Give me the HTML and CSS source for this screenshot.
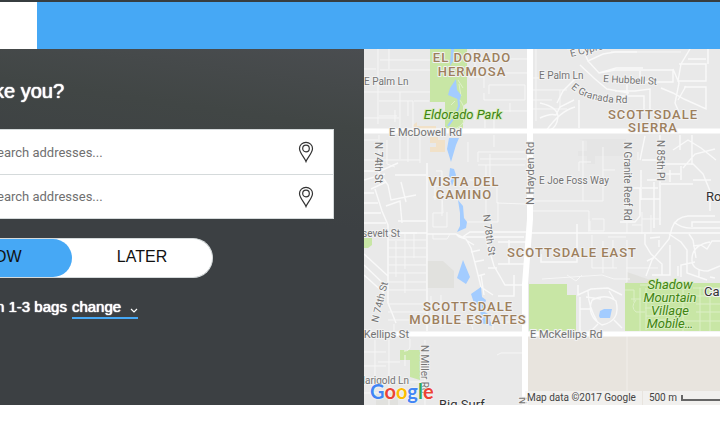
FILE: index.html
```html
<!DOCTYPE html>
<html lang="en">
<head>
    <meta charset="UTF-8">
    <meta name="viewport" content="width=device-width, initial-scale=1.0">
    <title>Book a ride</title>
    <link rel="stylesheet" href="styles.css">
</head>
<body>
    <!-- Top Bar -->
    <header class="top-bar">
        <div class="top-logo"></div>
    </header>

    <main class="main-content">
        <!-- Booking Form -->
        <form class="booking">
            <h1>ke you?</h1>
            <div class="address-box">
                <div class="address-row">
                    <input type="text" placeholder="earch addresses..." aria-label="Pickup address">
                    <svg class="pin" viewBox="0 0 16 22" aria-hidden="true">
                        <path d="M8 20.5C6.500 16.500 1.500 12 1.500 7.500a6.500 6.200 0 0 1 13 0C14.500 12 9.500 16.500 8 20.500z"/>
                        <circle cx="8" cy="7.500" r="3.300"/>
                    </svg>
                </div>
                <div class="address-row">
                    <input type="text" placeholder="earch addresses..." aria-label="Destination address">
                    <svg class="pin" viewBox="0 0 16 22" aria-hidden="true">
                        <path d="M8 20.5C6.500 16.500 1.500 12 1.500 7.500a6.500 6.200 0 0 1 13 0C14.500 12 9.500 16.500 8 20.500z"/>
                        <circle cx="8" cy="7.500" r="3.300"/>
                    </svg>
                </div>
            </div>
            <div class="when">
                <button type="button" class="when-btn active">OW</button>
                <button type="button" class="when-btn">LATER</button>
            </div>
            <p class="bags">
                <span>n 1-3 bags</span>
                <a href="#">change
                    <svg viewBox="0 0 8 6" aria-hidden="true"><path d="M1 1l3 3 3-3"/></svg>
                </a>
            </p>
        </form>

        <!-- Map -->
        <section class="map">
            <svg class="map-canvas" viewBox="364 49 356 356" preserveAspectRatio="xMinYMin slice">
                <rect class="land" x="364" y="49" width="1200" height="356"/>

                <!-- parks and special areas -->
                <path class="park" d="M430 49h37v54l-4 3v25h-18v-29h-15zM364 238h8v7l-4 3h-4zM529 284h38v11h9v36h-47zM625 283h600v48H625zM400 350h20v30l-10-3v-17h-10z"/>
                <path class="sand" d="M527 335h700v70H527z"/>
                <path class="school" d="M413 125l4-3v4h19v3h10v5h-9v-2h-24zM430 137h8v3h7v12h-15v-5h6v-4h-6z"/>
                <path class="lot" d="M427 261h16l11 10v17h-27zM376 393h22v12h-22zM627 272l32 11h-32z"/>
                <path class="mall" d="M579 139h47v17h-31v8h-8v-8h-9v-5h9v-10z"/>

                <!-- local streets -->
                <path class="street" d="M378 49v75M364 69h12M380 60h50M380 70h50M389 49v20M364 92h66M379 101h34v29M400 92v38M414 101h15M395 110v12M364 118h35M408 101v15M379 116h18M469 59h58M475 49v24h52M489 94v-9h36v15h-41v-7M469 111h58M485 112v16M469 77h15v11M494 120v11M510 103v9M475 120v-7"/>
                <path class="street" d="M379 135v29M387 140v24l8 3M400 137v22M408 137v25M364 160h56M420 135v28M478 162v-10h48M468 142v20M480 159h46M494 135v12M364 140h14"/>
                <path class="street wide" d="M364 180l21-6M371 189l15-7M364 171h14l10 14 3 15 25-5M375 189l7 22 6 14v78l8 20M401 182l5 20M395 175h31M378 172l20-9M386 206l14-5 2 22M398 221h28M364 193h10M364 203h14M364 213h17M364 223h22M364 233h53"/>
                <path class="street" d="M388 240h38M388 248h38M388 257h38M388 265h38M388 273h38M388 282h38M388 290h38M405 234v35M414 234v24M396 241v36M405 273v20M388 304h38M388 312h38M388 320h38M433 234v5h14l3-5M442 195l1 18h-10v14h14v-15M433 197h9v19M436 171h6v15h-7v14M469 180h22M486 193v29h-19M486 165v20M497 185v18l28 1M498 202v20h-12M478 165h47M490 154v30"/>
                <path class="street wide" d="M364 254l24 22M364 265l24 23M364 275l20 18M427 163v168M427 234h29l6 3h62M456 234l3 3 7 2 5 9 5 19 5 20 12 8M486 238l3 11 5 17 7 12 4 7h20M466 240l8 5M471 252l9-2M474 262l10-2M478 276l7-2M461 238l9-6h57M498 242h28M509 240v24M498 264h28M514 275v21h-16M488 268h9M481 275l3 20"/>
                <path class="street" d="M430 322h22M431 296v30M441 295v32M454 322h67M493 318v12M473 330l-4-15M394 324v10M389 340v65M375 340v44M364 352h22M364 366h22M378 362h22M410 339v7q0 5-6 5M425 340v65M497 355l4-2h23M364 382h36M400 382h25M364 393h16M405 355v11"/>
                <path class="street" d="M536 49v72M567 49h20M611 52h70M532 78h18M532 90h35M560 90v18M532 100h20M532 109h35M532 201h71v-54M583 201v-60M603 170h12M579 171v-9h12M532 211h57v21M589 219v12M592 219h12v12h-14v-10M592 235v33h25M542 279l60-4 12 4h16M603 241v32M567 275l9 6 6-6"/>
                <path class="street wide" d="M577 224v38h-36v-8M583 49l5 12 15-7 12-2h22M588 61l11 12 17-5h27M580 65l15 14 12 10 22 4M599 73l16-3h58v12h-58M615 91h20l15-2v20l10 8v13M579 75l-16 16-6 12M540 103q18 4 18 14-1 10-8 13M540 118q10-5 16-3l4-8 14-7M546 131q14-20 29-24M579 100v28M617 96h27v16h-18M673 69l6 14-4 20 6 14M690 49l-9 15-3 17h28v-17h-27M688 59h18M661 88l12 5 11 6 22 10v-22h-22M708 49v15M640 71v11M627 82v14M686 86l-8 14"/>
                <path class="street wide" d="M620 222h15l5-6v-28h-14M660 195V135M645 136l-5 24M641 170v30M647 180h13M642 188h16M654 182v46M642 160h17M661 184h32M660 174h20M681 166v14M660 164h33l10 10 7 17v20M673 150l15-10 13 8 15 12M683 168l12-14 20-5M692 135v30M680 135v15M670 170v12M693 180h18M660 195v30M640 199h20"/>
                <path class="street wide" d="M715 216h-27q-12 1-16 12l-3 11-17 21-6 16M674 222q8 7 20 6h26M692 227v-5h28M645 234v10l6 10 11 10v11h8v-30M652 275h15M669 234l12 8 6 8v23l20 7M689 234l4 6 3 18M693 246l8-1 6 4 5-8h8M681 277v-12l14-3M699 278v-9M710 242q-17 3-18 16t16 13l12-5M710 277l5 1M650 238l10-1M647 261l8-4M659 240v7M678 266v10"/>
                <path class="street" d="M608 237h18M627 166v67M627 240v42M642 212v22M651 215v18M642 219h17M632 225h10M638 152v8M613 240v28M626 268h32"/>
                <path class="street wide" d="M578 285v10l13-6 17-1 14 7M580 297v34M586 297l15 2M592 300q-6 16 10 25 19-4 14-24-10-8-24-1M580 309h12M598 324l-9 9M614 320l8 8M588 291q0 15 10 32M609 291l5 8"/>
                <path class="street park-road" d="M625 290h9v12M640 288v43M646 288v42M631 299h10M643 299l11-7M645 308h13v8h-12M654 320h26M683 289v42M693 288h27M696 296h24M696 304h24M696 312h24M684 321h36M700 287v44M710 287v44M636 300q-6 7 0 12h9M640 285h10"/>
                <path class="street thin-road" d="M627 336v55M627 335h45"/>

                <!-- main roads -->
                <path class="road major" d="M364 131h1000M364 334h1000"/>
                <path class="road avenue" d="M530 49v170l-5 65v121"/>
                <path class="road" d="M364 233h63M532 233h700"/>
                <path class="park-path" d="M459 84l2 12M458 98q8 8 7 19t-14 12M458 80l5 8M455 101l-4 4"/>

                <!-- water -->
                <path class="water" d="M451 49h3l-1 12-3 5M456 79l1 11 4 5-1 5-12-5 2-7zM449 138h10l-3 7-5 17-4-13zM450 168l4 1 2 6-4 11-3-9zM458 200l5 6 1 12 3 4-1 6-9 4 3-6v-13zM463 260l7 17-4 7-9-6zM471 294l10-7 1 10 4 3-3 11 5 3 4 12-11-3-1-18-6-2z"/>
                <path class="water" d="M600 311l4-2h8l-2 9h-10l-1-2z"/>
                <path class="creek" d="M458 94l1 12-4 10-7 10"/>

                <!-- neighbourhoods -->
                <g class="area">
                    <text x="472" y="62">EL DORADO</text>
                    <text x="472" y="76">HERMOSA</text>
                    <text x="653" y="119">SCOTTSDALE</text>
                    <text x="653" y="132">SIERRA</text>
                    <text x="464" y="186">VISTA DEL</text>
                    <text x="464" y="199">CAMINO</text>
                    <text x="572" y="257">SCOTTSDALE EAST</text>
                    <text x="468" y="311">SCOTTSDALE</text>
                    <text x="468" y="324">MOBILE ESTATES</text>
                </g>
                <g class="park-name">
                    <text x="463" y="119">Eldorado Park</text>
                    <text x="670" y="289">Shadow</text>
                    <text x="670" y="302">Mountain</text>
                    <text x="670" y="315">Village</text>
                    <text x="670" y="328">Mobile…</text>
                </g>

                <!-- street names -->
                <g class="street-name">
                    <text x="364" y="85">E Palm Ln</text>
                    <text x="389" y="136" class="main">E McDowell Rd</text>
                    <text x="539" y="79">E Palm Ln</text>
                    <text x="603" y="82" transform="rotate(3 603 82)">E Hubbell St</text>
                    <text><textPath href="#granada">E Granada Rd</textPath></text>
                    <text x="571" y="57" transform="rotate(-14 571 57)">E Cypress St</text>
                    <text x="539" y="184">E Joe Foss Way</text>
                    <text x="400" y="237" text-anchor="end">Roosevelt St</text>
                    <text x="409" y="338" text-anchor="end" class="main">McKellips St</text>
                    <text x="530" y="338" class="main">E McKellips Rd</text>
                    <text x="409" y="384" text-anchor="end">E Marigold Ln</text>
                    <text transform="translate(375 142) rotate(90)">N 74th St</text>
                    <text transform="translate(378 323) rotate(-76)">N 74th St</text>
                    <text transform="translate(483 215) rotate(82)">N 78th St</text>
                    <text transform="translate(534 205) rotate(-90)" class="main">N Hayden Rd</text>
                    <text transform="translate(624 142) rotate(90)">N Granite Reef Rd</text>
                    <text transform="translate(657 140) rotate(90)">N 85th Pl</text>
                    <text transform="translate(421 345) rotate(90)">N Miller Rd</text>
                    <text transform="translate(527 404) rotate(-90)">N</text>
                </g>
                <path id="granada" fill="none" d="M571 88q17 16 60 15"/>
                <g class="place">
                    <text x="706" y="201">Roadrunner Park</text>
                    <text x="704" y="296">Camelback</text>
                    <text x="439" y="409">Big Surf</text>
                </g>
            </svg>
            <div class="map-logo"><span class="blue">G</span><span class="red">o</span><span class="yellow">o</span><span class="blue">g</span><span class="green">l</span><span class="red">e</span></div>
            <div class="map-legend">
                <span class="map-data">Map data ©2017 Google</span>
                <span class="map-scale">500 m <i></i></span>
            </div>
        </section>
    </main>
</body>
</html>
```
FILE: styles.css
```css
body {
    font-family: "Liberation Sans", Arial, sans-serif;
    background-color: #ffffff;
    margin: 0;
    overflow-x: hidden;
}
.top-bar {
    display: flex;
    height: 47px;
    background-color: #46a8f5;
    border-top: 2px solid #373d40;
}
.top-logo {
    width: 37px;
    background-color: #ffffff;
}
.main-content {
    display: flex;
    align-items: stretch;
}

/* Booking form */
.booking {
    flex: 0 0 364px;
    box-sizing: border-box;
    padding: 30px 30px 84px 0;
    overflow: hidden;
    background: linear-gradient(188deg, #4a4d50 0, #414645 80px, #3c4043 180px);
    color: #ffffff;
}
.booking h1 {
    margin: 0 0 26px -6px;
    font-size: 20px;
    line-height: 24px;
    font-weight: normal;
    text-shadow: 0 0 1px #ffffff, 0 0 1px #ffffff;
}
.address-box {
    background-color: #ffffff;
    border: 1px solid #d5dadb;
    border-left: 0;
}
.address-row {
    display: flex;
    align-items: center;
    height: 44px;
    padding-right: 19px;
}
.address-row + .address-row {
    height: 43px;
    border-top: 1px solid #d5dadb;
}
.address-row input {
    flex: 1;
    min-width: 0;
    margin-left: -3px;
    padding: 0;
    border: 0;
    outline: none;
    background: none;
    font-family: Roboto, sans-serif;
    font-size: 13px;
    color: #333333;
}
.address-row input::placeholder {
    color: #707070;
    opacity: 1;
}
.pin {
    width: 16px;
    height: 22px;
    fill: none;
    stroke: #333333;
    stroke-width: 1.2;
}
.when {
    display: flex;
    width: 213px;
    height: 40px;
    margin-top: 19px;
    box-sizing: border-box;
    border: 1px solid #d5dadb;
    border-left: 0;
    border-radius: 0 20px 20px 0;
    background-color: #ffffff;
}
.when-btn {
    flex: 1;
    padding: 0 0 2px;
    border: 0;
    background: none;
    font-family: inherit;
    font-size: 16px;
    color: #111111;
}
.when-btn.active {
    flex: 0 0 72px;
    border-radius: 0 20px 20px 0;
    background-color: #46a8f5;
    text-align: left;
    text-indent: -6px;
}
.bags {
    display: flex;
    gap: 5px;
    margin: 19px 0 0 -4px;
    font-size: 15px;
    line-height: 20px;
    text-shadow: 0 0 1px #ffffff, 0 0 1px #ffffff;
}
.bags a {
    display: flex;
    align-items: center;
    gap: 9px;
    color: #ffffff;
    text-decoration: none;
    border-bottom: 2px solid #46a8f5;
}
.bags svg {
    width: 8px;
    height: 6px;
    margin-top: 8px;
    fill: none;
    stroke: #ffffff;
    stroke-width: 1.2;
}

/* Map */
.map {
    position: relative;
    flex: 1;
    min-width: 0;
    height: 356px;
    overflow: hidden;
    font-family: Roboto, sans-serif;
}
.map-canvas {
    display: block;
    width: 100%;
    height: 100%;
}
.land { fill: #e9e9e9; }
.park { fill: #c8e6a5; }
.sand { fill: #e8e4de; }
.school { fill: #f1e1c8; }
.lot { fill: #e1e1de; }
.mall { fill: #e5e5e5; }
.water { fill: #a3ccff; }
.creek, .park-path, .street, .road { fill: none; }
.creek { stroke: #a3ccff; stroke-width: 2; }
.park-path { stroke: #dff1ca; }
.street { stroke: #f6f6f6; stroke-width: 1; }
.street.wide { stroke: #f9f9f9; stroke-width: 1.4; }
.street.park-road { stroke: #dcefc6; }
.street.thin-road { stroke: #f1eeea; }
.road { stroke: #fafafa; stroke-width: 1.5; }
.road.major { stroke: #ffffff; stroke-width: 5; }
.road.avenue { stroke: #ffffff; stroke-width: 6; }
.map-canvas text {
    paint-order: stroke;
    stroke: #f2f2f2;
    stroke-width: 2;
    stroke-linejoin: round;
}
.area text {
    fill: #9d7f5d;
    font-size: 13px;
    font-weight: 500;
    letter-spacing: 1px;
    text-anchor: middle;
}
.park-name text {
    fill: #3f8410;
    stroke: #d8eec0;
    font-size: 13px;
    font-style: italic;
    text-anchor: middle;
}
.street-name text {
    fill: #747474;
    font-size: 10px;
}
.street-name .main {
    font-size: 11px;
}
.place text {
    fill: #333333;
    font-size: 13px;
}
.map-logo {
    position: absolute;
    left: 6px;
    bottom: 2px;
    font-family: Lato, sans-serif;
    font-size: 20px;
    font-weight: bold;
    line-height: 24px;
    text-shadow: 0 0 1px #ffffff, 0 0 2px #ffffff;
}
.blue { color: #4285f4; }
.red { color: #ea4335; }
.yellow { color: #fbbc05; }
.green { color: #34a853; }
.map-legend {
    position: absolute;
    right: 0;
    bottom: 0;
    display: flex;
    gap: 1px;
    font-size: 10px;
    line-height: 14px;
    color: #444444;
}
.map-data, .map-scale {
    background-color: rgba(245, 245, 245, 0.7);
    padding: 0 6px 0 2px;
}
.map-scale {
    display: flex;
    align-items: center;
    gap: 4px;
    padding: 0 0 0 6px;
}
.map-scale i {
    width: 37px;
    height: 4px;
    border-left: 2px solid #666666;
    border-bottom: 2px solid #666666;
}
```
